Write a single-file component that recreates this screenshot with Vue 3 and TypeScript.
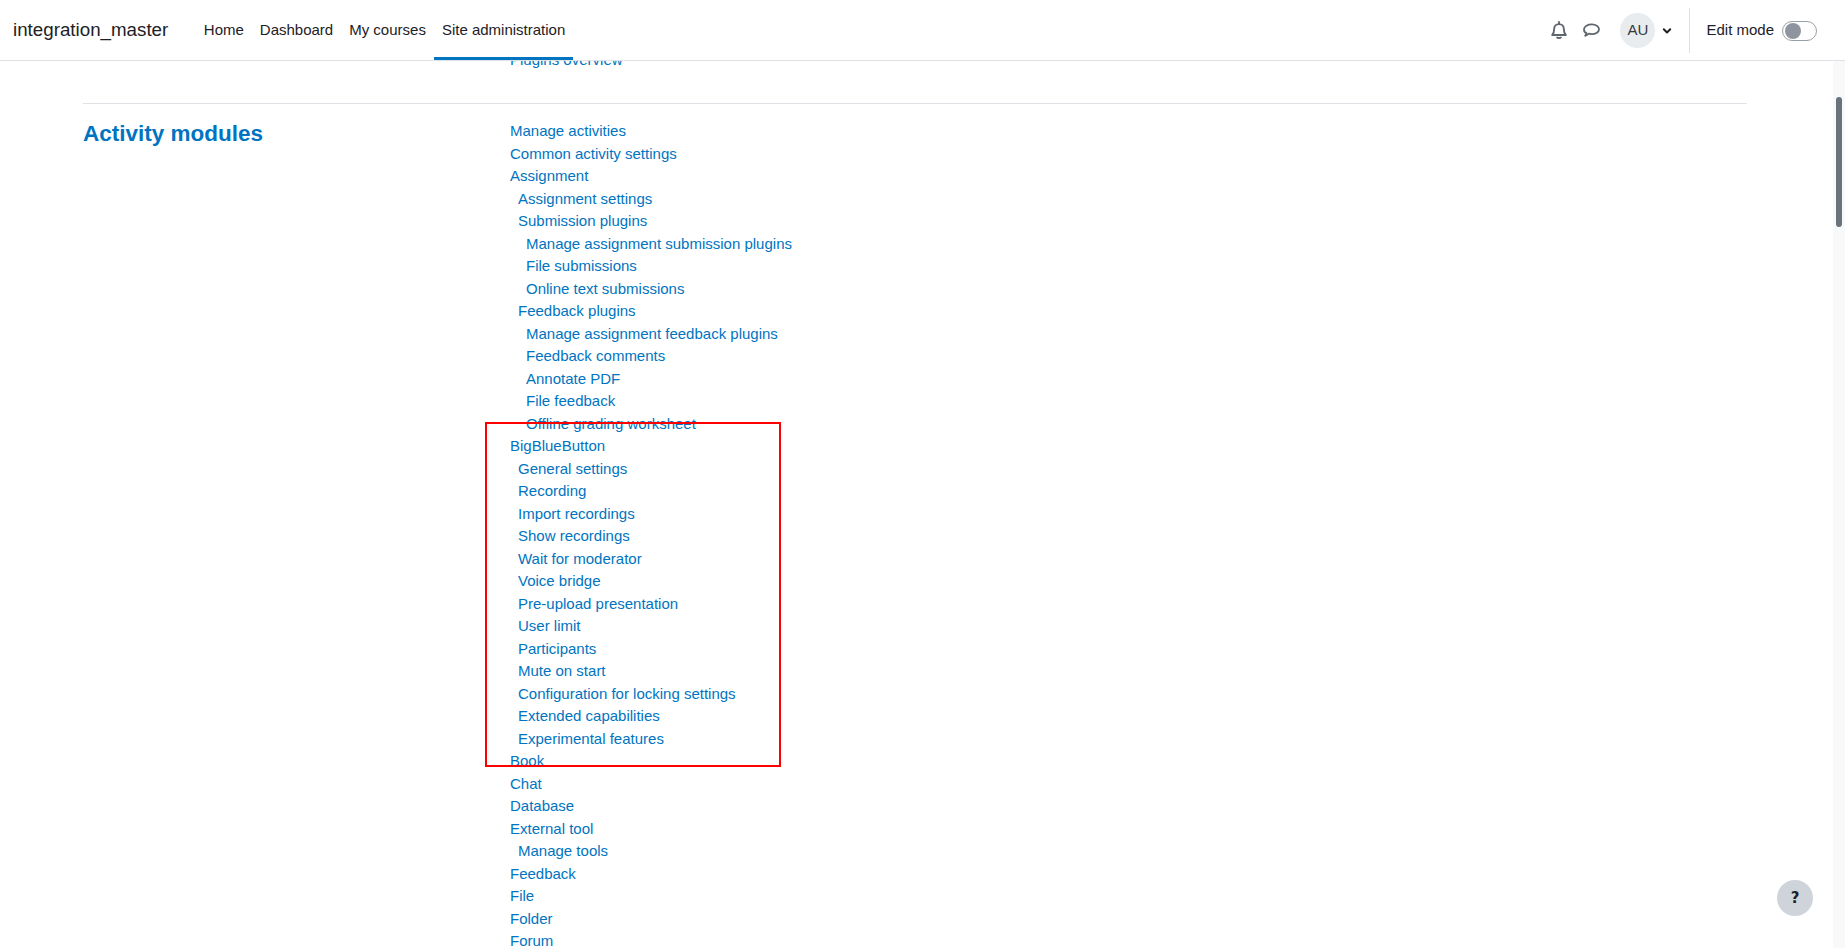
<script setup lang="ts">
interface Row { label: string; level: number }
const navItems: string[] = ['Home', 'Dashboard', 'My courses', 'Site administration']
const tree: [string, number][] = [
  ['Manage activities', 0], ['Common activity settings', 0], ['Assignment', 0],
  ['Assignment settings', 1], ['Submission plugins', 1],
  ['Manage assignment submission plugins', 2], ['File submissions', 2], ['Online text submissions', 2],
  ['Feedback plugins', 1],
  ['Manage assignment feedback plugins', 2], ['Feedback comments', 2], ['Annotate PDF', 2], ['File feedback', 2], ['Offline grading worksheet', 2],
  ['BigBlueButton', 0],
  ['General settings', 1], ['Recording', 1], ['Import recordings', 1], ['Show recordings', 1], ['Wait for moderator', 1],
  ['Voice bridge', 1], ['Pre-upload presentation', 1], ['User limit', 1], ['Participants', 1], ['Mute on start', 1],
  ['Configuration for locking settings', 1], ['Extended capabilities', 1], ['Experimental features', 1],
  ['Book', 0], ['Chat', 0], ['Database', 0], ['External tool', 0], ['Manage tools', 1],
  ['Feedback', 0], ['File', 0], ['Folder', 0], ['Forum', 0],
]
const rows: Row[] = tree.map(([label, level]) => ({ label, level }))
</script>

<template>
  <div class="page">
    <header class="topbar">
      <span class="brand">integration_master</span>
      <nav class="nav">
        <a v-for="item in navItems" :key="item" class="nav-item" :class="{ active: item === 'Site administration' }">{{ item }}</a>
      </nav>
      <div class="actions">
        <svg class="bell" width="16" height="18" viewBox="0 0 16 18" fill="none" stroke="#5f666d" stroke-width="1.9" stroke-linejoin="round" stroke-linecap="round">
          <path d="M1.2 14c1.400-1.400 2-2.800 2-6.200 0-2.700 1.900-4.700 4.800-4.700s4.800 2 4.800 4.700c0 3.400.6 4.800 2 6.200z" />
          <path d="M8 1v2" />
          <path d="M6.200 16.600c.5.500 3.100.5 3.600 0" stroke-width="2" />
        </svg>
        <svg class="bubble" width="17" height="16" viewBox="0 0 17 16" fill="none" stroke="#5f666d" stroke-width="1.8" stroke-linejoin="round">
          <path d="M8.800 1.300c3.900 0 7.200 2 7.200 4.900s-3.300 4.900-7.200 4.900c-1 0-2-.1-2.900-.4-.9.900-2.100 1.600-3.700 2.100.7-.9 1.100-1.900 1.200-3C2 9.700 1 8.100 1 6.200 1 3.300 4.900 1.300 8.800 1.300z" />
        </svg>
        <div class="avatar">AU</div>
        <svg class="chevron" width="10" height="8" viewBox="0 0 10 8" fill="none" stroke="#1d2125" stroke-width="2" stroke-linecap="round" stroke-linejoin="round">
          <path d="M1.800 2.300 5 5.500l3.200-3.200" />
        </svg>
        <div class="divider"></div>
        <span class="edit-label">Edit mode</span>
        <div class="toggle"><span class="knob"></span></div>
      </div>
    </header>

    <main class="content">
      <a class="link first-link">Plugins overview</a>
      <hr class="rule" />
      <section class="section">
        <h2 class="section-title">Activity modules</h2>
        <ul class="list">
          <li v-for="row in rows" :key="row.label + row.level" :class="'level-' + row.level">
            <a class="link">{{ row.label }}</a>
          </li>
        </ul>
      </section>
      <div class="highlight"></div>
    </main>

    <aside class="scrolltrack"><span class="scrollthumb"></span></aside>
    <button class="help" type="button">?</button>
  </div>
</template>

<style>
html, body { margin: 0; height: 100%; overflow: hidden; background: #fff; }
</style>

<style scoped>
.page {
  position: relative;
  display: flex;
  height: 100vh;
  overflow: hidden;
  font-family: "Liberation Sans", Arial, sans-serif;
  font-size: 15px;
  line-height: 22.5px;
  color: #1d2125;
}
.topbar {
  position: absolute;
  top: 0; left: 0; right: 0;
  z-index: 3;
  height: 60px;
  display: flex;
  align-items: stretch;
  background: #fff;
  border-bottom: 1px solid #dee2e6;
  padding-left: 13px;
}
.brand {
  align-self: center;
  font-size: 18.75px;
  margin-right: 27.5px;
}
.nav { display: flex; }
.nav-item {
  display: flex;
  align-items: center;
  padding: 3px 8px 0;
  border-bottom: 3px solid transparent;
  box-sizing: border-box;
}
.nav-item.active { border-bottom-color: #0074c1; }
.actions {
  margin-left: auto;
  display: flex;
  align-items: center;
  padding-right: 28px;
}
.bell { margin-right: 15.5px; margin-top: -1px; }
.bubble { margin-right: 20.5px; margin-top: 2px; }
.avatar {
  width: 35px; height: 35px;
  border-radius: 50%;
  background: #e9ecef;
  display: flex; align-items: center; justify-content: center;
  color: #343a40;
}
.chevron { margin-left: 7px; margin-top: 2px; }
.divider { width: 1px; height: 45px; background: #dee2e6; margin: 0 16px 0 17px; }
.edit-label { margin-right: 8px; }
.toggle {
  width: 35px; height: 20px;
  box-sizing: border-box;
  border: 1px solid #9aa0a7;
  border-radius: 10px;
  background: #fff;
  padding: 1px 2px;
  margin-top: 2px;
}
.knob {
  display: block;
  width: 16px; height: 16px;
  border-radius: 50%;
  background: #8f959e;
}
.content {
  position: relative;
  flex: 1;
  min-width: 0;
  padding: 49px 86px 0 83px;
  overflow: hidden;
}
.link { color: #0074c1; text-decoration: none; }
.first-link { display: block; margin-left: 427px; }
.rule { border: 0; border-top: 1px solid #dee2e6; margin: 31px 0 16px; }
.section { display: grid; grid-template-columns: 427px 1fr; }
.section-title {
  margin: 0;
  font-size: 22.5px;
  line-height: 27px;
  font-weight: 700;
  color: #0074c1;
}
.list { list-style: none; margin: 0; padding: 0.75px 0 0; }
.level-1 { padding-left: 8px; }
.level-2 { padding-left: 16px; }
.highlight {
  position: absolute;
  left: 485px; top: 422px;
  width: 296px; height: 345px;
  box-sizing: border-box;
  border: 2px solid #ff0000;
}
.scrolltrack {
  position: relative;
  width: 12px;
  flex: none;
  background: #f8f9fa;
}
.scrollthumb {
  position: absolute;
  left: 3px; top: 97px;
  width: 6px; height: 130px;
  border-radius: 3px;
  background: #6a737b;
}
.help {
  position: absolute;
  left: 1777px; top: 880px;
  width: 36px; height: 36px;
  padding: 0;
  border: 0;
  border-radius: 50%;
  background: #ced4da;
  color: #1d2125;
  font-family: "DejaVu Sans", sans-serif;
  font-size: 15px;
  font-weight: 700;
  line-height: 36px;
  text-align: center;
}
</style>
